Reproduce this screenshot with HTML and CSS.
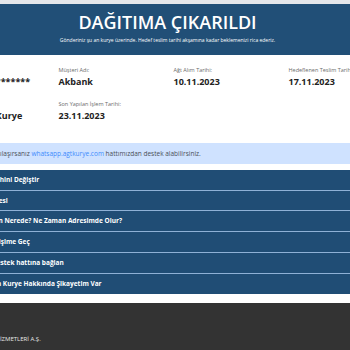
FILE: index.html
```html
<!DOCTYPE html>
<html lang="tr">
<head>
    <meta charset="UTF-8">
    <meta name="viewport" content="width=device-width, initial-scale=1.0">
    <title>Gönderi Takip</title>
    <link rel="stylesheet" href="styles.css">
</head>
<body>
    <div class="topbar"></div>
    <div class="page">
        <header class="status">
            <h1>DAĞITIMA ÇIKARILDI</h1>
            <p>Gönderiniz şu an kurye üzerinde. Hedef teslim tarihi akşamına kadar beklemenizi rica ederiz.</p>
        </header>

        <section class="details">
            <div class="item">
                <span class="label">Takip No:</span>
                <span class="value">AGT**************</span>
            </div>
            <div class="item">
                <span class="label">Müşteri Adı:</span>
                <span class="value">Akbank</span>
            </div>
            <div class="item">
                <span class="label">Ağt Alım Tarihi:</span>
                <span class="value">10.11.2023</span>
            </div>
            <div class="item">
                <span class="label">Hedeflenen Teslim Tarihi:</span>
                <span class="value">17.11.2023</span>
            </div>
            <div class="item">
                <span class="label">Taşıyan:</span>
                <span class="value">Dağıtımcısı Kurye</span>
            </div>
            <div class="item">
                <span class="label">Son Yapılan İşlem Tarihi:</span>
                <span class="value">23.11.2023</span>
            </div>
        </section>

        <div class="notice">
            Bir sorunla karşılaşırsanız <a href="#">whatsapp.agtkurye.com</a> hattımızdan destek alabilirsiniz.
        </div>

        <ul class="actions">
            <li>Teslimat Tarihini Değiştir</li>
            <li>Teslimat Adresi</li>
            <li>Kargom Şu An Nerede? Ne Zaman Adresimde Olur?</li>
            <li>Kurye İle İletişime Geç</li>
            <li>Whatsapp Destek hattına bağlan</li>
            <li>Şubeler ya da Kurye Hakkında Şikayetim Var</li>
        </ul>

        <footer class="footer">
            <span>AGT KURYE HİZMETLERİ A.Ş.</span>
        </footer>
    </div>
</body>
</html>
```

FILE: styles.css
```css
html, body {
    margin: 0;
    padding: 0;
    overflow: hidden;
    background: #ffffff;
    font-family: "Open Sans", Arial, sans-serif;
}
.topbar {
    height: 4px;
    background-color: #e4e6ea;
}
.page {
    width: 335px;
    display: flex;
    flex-direction: column;
    align-items: center;
}
.page > * {
    width: 460px;
    flex-shrink: 0;
    box-sizing: border-box;
}
.status {
    background-color: #214f77;
    color: #ffffff;
    text-align: center;
    height: 51px;
    padding-top: 7px;
}
.status h1 {
    margin: 0;
    font-size: 18px;
    font-weight: 600;
    line-height: 22px;
}
.status p {
    margin: 4px 0 0;
    font-size: 5px;
    line-height: 7px;
}
.details {
    display: grid;
    grid-template-columns: repeat(4, 115px);
    row-gap: 11px;
    padding: 11px 0 20px;
}
.item {
    display: flex;
    flex-direction: column;
    padding-left: 6px;
}
.label {
    font-size: 5.5px;
    line-height: 8px;
    color: #6b6b6b;
}
.value {
    font-size: 9px;
    font-weight: 700;
    line-height: 15px;
    color: #222222;
}
.notice {
    background-color: #cfe2ff;
    color: #4a4f57;
    font-size: 6.5px;
    line-height: 21px;
    padding-left: 15px;
    margin-bottom: 6px;
}
.notice a {
    color: #3d8bfd;
    text-decoration: none;
}
.actions {
    list-style: none;
    margin: 0 0 9px;
    padding: 0;
    background-color: #204d75;
}
.actions li {
    color: #ffffff;
    font-size: 6.5px;
    font-weight: 700;
    line-height: 19.7px;
    padding-left: 20px;
    border-bottom: 1px solid #8fb1d6;
}
.actions li:last-child {
    border-bottom-color: #204d75;
}
.footer {
    background-color: #333333;
    color: #e8e8e8;
    font-size: 6px;
    line-height: 8px;
    height: 60px;
    padding: 32px 0 0 25px;
}
```
